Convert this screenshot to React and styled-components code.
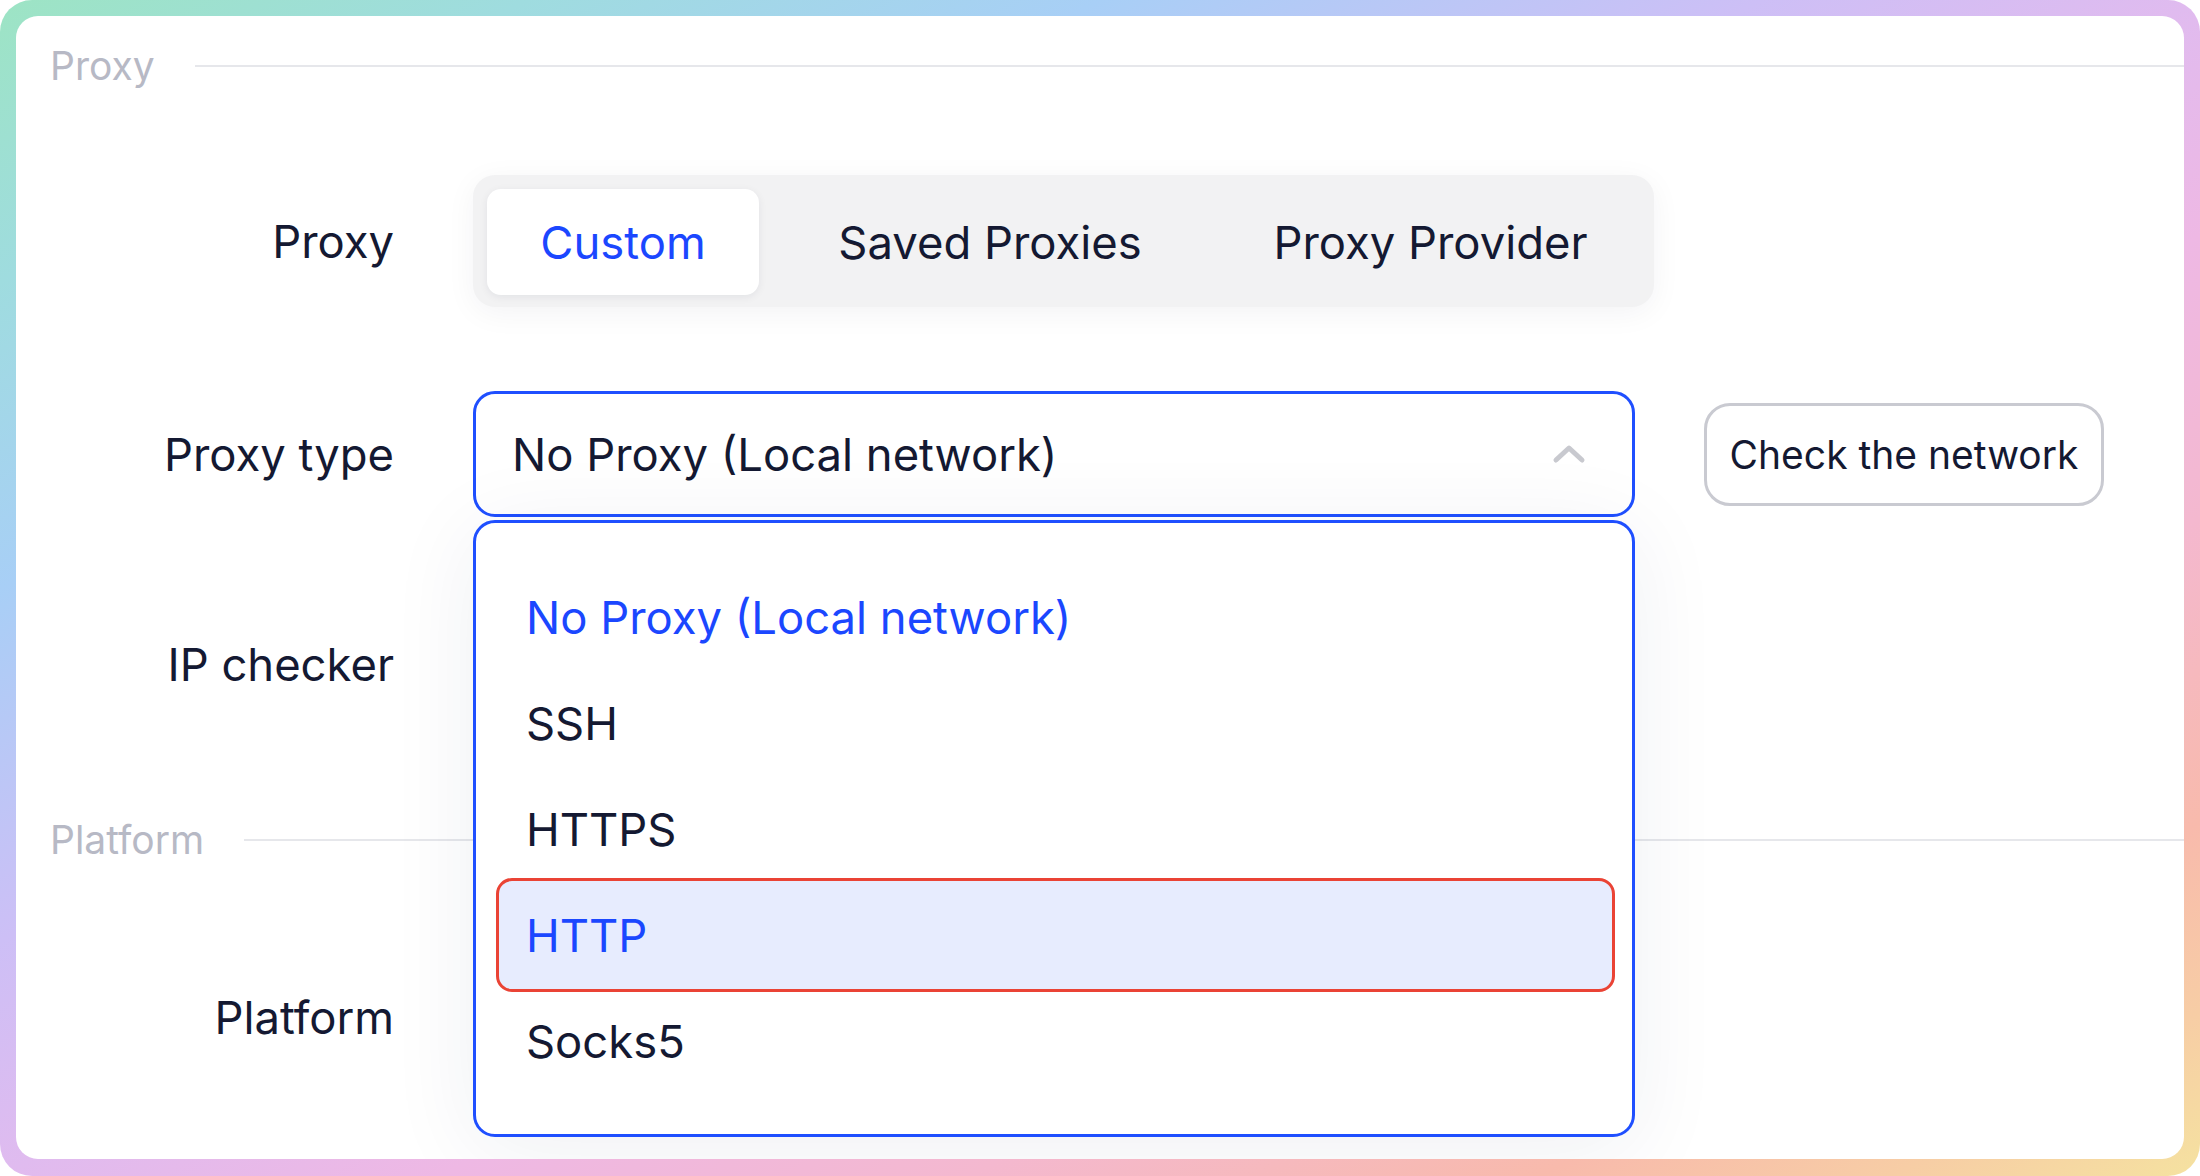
import React from "react";
import styled, { createGlobalStyle, css } from "styled-components";

const GlobalStyle = createGlobalStyle`
  * { box-sizing: border-box; }
  html, body { margin: 0; padding: 0; background: #ffffff; }
  body { font-family: Inter, "Noto Sans", "Liberation Sans", sans-serif; }
`;

const BLUE = "#1b47ff";
const INK = "#141932";

const Frame = styled.div`
  width: 100%;
  height: 100vh;
  padding: 16px 16px 17px 16px;
  border-radius: 32px;
  background: linear-gradient(
    to bottom right,
    #9de4c4 0%,
    #9fdcdf 12%,
    #a8cff6 25%,
    #cdbff6 40%,
    #e0bbef 50%,
    #eeb8e4 60%,
    #f4b8cf 72%,
    #f8baac 85%,
    #f7cda5 93%,
    #f5e2a0 100%
  );
`;

const Card = styled.div`
  height: 100%;
  background: #ffffff;
  border-radius: 22px;
  overflow: hidden;
  display: flex;
  flex-direction: column;
  padding: 26px 0 0 34px;
`;

const Section = styled.section`
  display: flex;
  flex-direction: column;
  margin-top: ${(p) => p.$top || 0}px;
`;

const SectionHeader = styled.div`
  display: flex;
  align-items: center;
  height: 48px;
`;

const SectionTitle = styled.span`
  font-size: 39px;
  line-height: 48px;
  color: #b7b9c5;
  white-space: nowrap;
`;

const SectionRule = styled.div`
  flex: 1;
  height: 2px;
  margin-left: 40px;
  background: #e6e7eb;
`;

const Rows = styled.div`
  display: flex;
  flex-direction: column;
  gap: 84px;
  margin-top: ${(p) => p.$top}px;
`;

const Row = styled.div`
  display: grid;
  grid-template-columns: 344px auto;
  column-gap: 79px;
  align-items: center;
  height: ${(p) => p.$h}px;
`;

const Label = styled.div`
  text-align: right;
  font-size: 45.4px;
  color: ${INK};
  white-space: nowrap;
`;

const Tabs = styled.div`
  display: grid;
  grid-template-columns: 272px 462px 419px;
  width: 1181px;
  height: 132px;
  padding: 14px 14px 12px 14px;
  border-radius: 22px;
  background: #f2f2f3;
  box-shadow: 0 6px 30px rgba(20, 25, 50, 0.05);
`;

const Tab = styled.div`
  display: flex;
  align-items: center;
  justify-content: center;
  border-radius: 14px;
  font-size: 45.4px;
  color: ${INK};
  white-space: nowrap;
  ${(p) =>
    p.$active &&
    css`
      background: #ffffff;
      color: ${BLUE};
      box-shadow: 0 2px 8px rgba(20, 25, 50, 0.07);
    `}
`;

const Controls = styled.div`
  display: flex;
  align-items: center;
  gap: 69px;
`;

const SelectWrap = styled.div`
  position: relative;
  width: 1162px;
`;

const SelectBox = styled.div`
  height: 126px;
  display: flex;
  align-items: center;
  justify-content: space-between;
  padding: 0 45px 0 36px;
  border: 3px solid #1f4fff;
  border-radius: 22px;
  background: #ffffff;
  font-size: 45.4px;
  color: ${INK};
  white-space: nowrap;
`;

const Menu = styled.div`
  position: absolute;
  top: calc(100% + 3px);
  left: 0;
  right: 0;
  height: 617px;
  z-index: 10;
  display: flex;
  flex-direction: column;
  padding: 41px 17px 41px 20px;
  border: 3px solid #1f4fff;
  border-radius: 22px;
  background: #ffffff;
  box-shadow: 0 12px 90px rgba(30, 40, 90, 0.07);
`;

const Option = styled.div`
  height: 106px;
  flex: none;
  display: flex;
  align-items: center;
  padding-left: 30px;
  border-radius: 16px;
  font-size: 45.4px;
  color: ${(p) => (p.$selected ? BLUE : INK)};
  white-space: nowrap;
  ${(p) =>
    p.$hover &&
    css`
      height: 114px;
      margin: -4px 0;
      padding-left: 27px;
      border: 3px solid #ea4335;
      background: #e7ecfe;
      color: ${BLUE};
    `}
`;

const CheckButton = styled.button`
  width: 400px;
  height: 103px;
  border: 3px solid #c9cad1;
  border-radius: 26px;
  background: #ffffff;
  font-family: inherit;
  font-size: 39px;
  color: ${INK};
  white-space: nowrap;
  padding: 0;
`;

const Chevron = () => (
  <svg width="36" height="22" viewBox="0 0 36 22" fill="none">
    <path
      d="M5 17 L18 5 L31 17"
      stroke="#c8c9cf"
      strokeWidth="5"
      strokeLinecap="round"
      strokeLinejoin="round"
    />
  </svg>
);

const options = [
  { label: "No Proxy (Local network)", selected: true },
  { label: "SSH" },
  { label: "HTTPS" },
  { label: "HTTP", hover: true },
  { label: "Socks5" },
];

export default function App() {
  return (
    <>
      <GlobalStyle />
      <Frame>
        <Card>
          <Section>
            <SectionHeader>
              <SectionTitle>Proxy</SectionTitle>
              <SectionRule />
            </SectionHeader>
            <Rows $top={85}>
              <Row $h={132}>
                <Label>Proxy</Label>
                <Tabs>
                  <Tab $active>Custom</Tab>
                  <Tab>Saved Proxies</Tab>
                  <Tab>Proxy Provider</Tab>
                </Tabs>
              </Row>
              <Row $h={126}>
                <Label>Proxy type</Label>
                <Controls>
                  <SelectWrap>
                    <SelectBox>
                      <span>No Proxy (Local network)</span>
                      <Chevron />
                    </SelectBox>
                    <Menu>
                      {options.map((o) => (
                        <Option key={o.label} $selected={o.selected} $hover={o.hover}>
                          {o.label}
                        </Option>
                      ))}
                    </Menu>
                  </SelectWrap>
                  <CheckButton>Check the network</CheckButton>
                </Controls>
              </Row>
              <Row $h={126}>
                <Label>IP checker</Label>
                <div />
              </Row>
            </Rows>
          </Section>
          <Section $top={89}>
            <SectionHeader>
              <SectionTitle>Platform</SectionTitle>
              <SectionRule />
            </SectionHeader>
            <Rows $top={90}>
              <Row $h={126}>
                <Label>Platform</Label>
                <div />
              </Row>
            </Rows>
          </Section>
        </Card>
      </Frame>
    </>
  );
}
